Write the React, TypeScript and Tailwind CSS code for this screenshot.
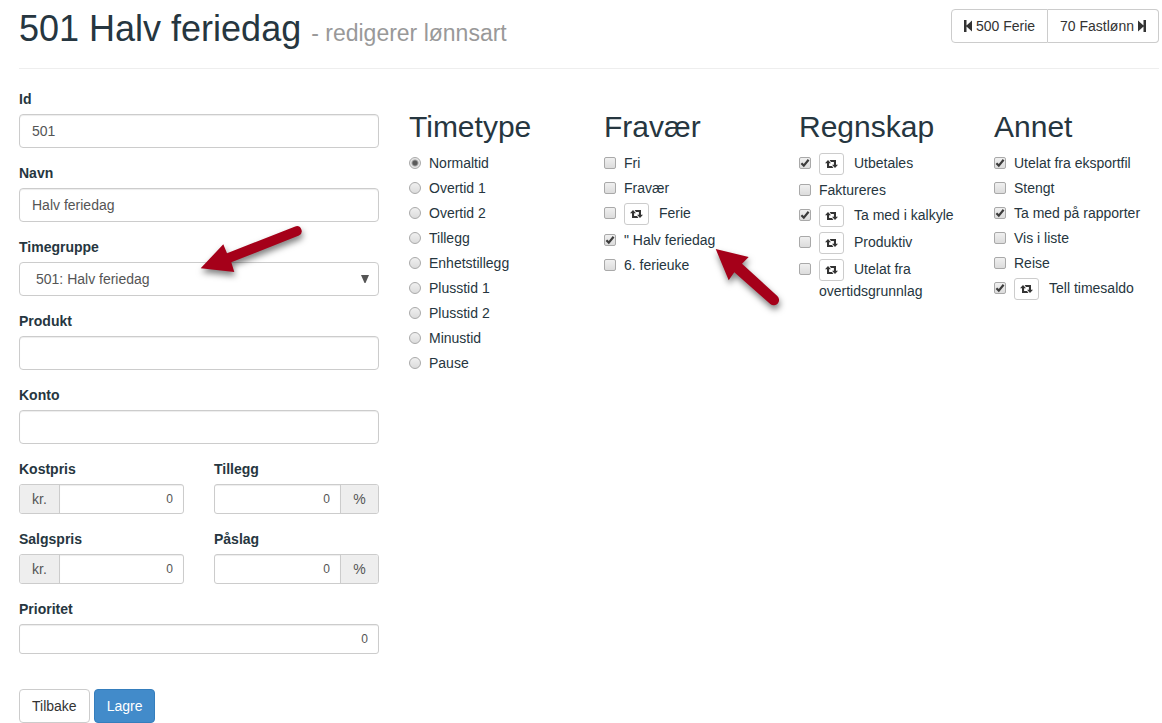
import { useId } from 'react';
import type { ReactNode } from 'react';

interface Option {
    label: string;
    checked?: boolean;
    sync?: boolean;
    pointer?: boolean;
}

const timeTypes = [
    'Normaltid',
    'Overtid 1',
    'Overtid 2',
    'Tillegg',
    'Enhetstillegg',
    'Plusstid 1',
    'Plusstid 2',
    'Minustid',
    'Pause',
];

const absence: Option[] = [
    { label: 'Fri' },
    { label: 'Fravær' },
    { label: 'Ferie', sync: true },
    { label: '" Halv feriedag', checked: true, pointer: true },
    { label: '6. ferieuke' },
];

const accounting: Option[] = [
    { label: 'Utbetales', checked: true, sync: true },
    { label: 'Faktureres' },
    { label: 'Ta med i kalkyle', checked: true, sync: true },
    { label: 'Produktiv', sync: true },
    { label: 'Utelat fra overtidsgrunnlag', sync: true },
];

const other: Option[] = [
    { label: 'Utelat fra eksportfil', checked: true },
    { label: 'Stengt' },
    { label: 'Ta med på rapporter', checked: true },
    { label: 'Vis i liste' },
    { label: 'Reise' },
    { label: 'Tell timesaldo', checked: true, sync: true },
];

function RetweetIcon() {
    return (
        <svg viewBox="0 0 13 8" className="w-[13px] h-2" fill="currentColor" aria-hidden="true">
            <path d="M3 0 L6 3.2 H4.1 V6 H7 L8.4 8 H2 V3.2 H0 Z" />
            <path d="M10 8 L7 4.8 H8.9 V2 H6 L4.6 0 H11 V4.8 H13 Z" />
        </svg>
    );
}

function StepIcon({ forward }: { forward?: boolean }) {
    return (
        <svg viewBox="0 0 9 12" className="w-[9px] h-3" fill="currentColor" aria-hidden="true">
            {forward ? (
                <path d="M1 0.5 L6.5 5.5 V0 H9 V12 H6.5 V6.5 L1 11.5 Z" />
            ) : (
                <path d="M8 0.5 L2.5 5.5 V0 H0 V12 H2.5 V6.5 L8 11.5 Z" />
            )}
        </svg>
    );
}

function Field({ label, children }: { label: string; children: (id: string) => ReactNode }) {
    const id = useId();

    return (
        <div className="relative mb-[15px]">
            <label htmlFor={id} className="block mb-[5px] font-bold">
                {label}
            </label>
            {children(id)}
        </div>
    );
}

function TextField({ label, value = '' }: { label: string; value?: string }) {
    return (
        <Field label={label}>
            {(id) => (
                <input
                    id={id}
                    type="text"
                    defaultValue={value}
                    className="block w-full h-[34px] px-3 border border-[#ccc] rounded text-[#555] shadow-[inset_0_1px_1px_rgba(0,0,0,0.075)]"
                />
            )}
        </Field>
    );
}

function NumberField({ label, prefix, suffix }: { label: string; prefix?: string; suffix?: string }) {
    return (
        <Field label={label}>
            {(id) => (
                <div className="flex h-[30px] border border-[#ccc] rounded-[3px] overflow-hidden text-[#555]">
                    {prefix && (
                        <span className="flex items-center px-3 bg-[#eee] border-r border-[#ccc]">{prefix}</span>
                    )}
                    <input
                        id={id}
                        type="text"
                        inputMode="numeric"
                        defaultValue="0"
                        className="flex-1 min-w-0 px-2.5 text-xs text-right shadow-[inset_0_1px_1px_rgba(0,0,0,0.075)]"
                    />
                    {suffix && (
                        <span className="flex items-center justify-center w-[38px] bg-[#eee] border-l border-[#ccc]">
                            {suffix}
                        </span>
                    )}
                </div>
            )}
        </Field>
    );
}

function OptionColumn({ title, children }: { title: string; children: ReactNode }) {
    return (
        <section className="pt-[21px]">
            <h2 className="mb-2.5 text-[30px] leading-[33px]">{title}</h2>
            <div className="flex flex-col gap-[5px]">{children}</div>
        </section>
    );
}

function CheckRow({ option }: { option: Option }) {
    const id = useId();

    return (
        <div className="relative flex gap-2">
            <span className="grid shrink-0 size-3 mt-1">
                <input
                    id={id}
                    type="checkbox"
                    defaultChecked={option.checked}
                    className="peer col-start-1 row-start-1 appearance-none size-3 border border-[#a9a9a9] rounded-xs bg-linear-to-b from-[#f0f0f0] to-[#dcdcdc]"
                />
                <svg
                    viewBox="0 0 12 12"
                    className="col-start-1 row-start-1 size-3 opacity-0 peer-checked:opacity-100 pointer-events-none"
                    fill="none"
                    stroke="#3c3c3c"
                    strokeWidth="2.2"
                    aria-hidden="true"
                >
                    <path d="M2.4 6.2 L4.8 8.6 L9.6 2.8" />
                </svg>
            </span>
            <div className="min-w-0">
                {option.sync && (
                    <button
                        type="button"
                        aria-label={`Synkroniser ${option.label}`}
                        className="inline-flex items-center justify-center w-[25px] h-[22px] mr-2.5 align-top border border-[#ccc] rounded-[3px] bg-white text-[#333]"
                    >
                        <RetweetIcon />
                    </button>
                )}
                <label htmlFor={id}>{option.label}</label>
            </div>
            {option.pointer && (
                <svg
                    viewBox="0 0 80 72"
                    className="absolute left-[106px] top-3 w-20 h-[72px] pointer-events-none drop-shadow-[1px_4px_3px_rgba(0,0,0,0.5)]"
                    fill="#a50019"
                    aria-hidden="true"
                >
                    <path d="M5.7 7 L38.7 15 L32 21.7 L67.3 54 A5.3 5.3 0 0 1 60.3 62 L24.3 30.3 L18.7 38.3 Z" />
                </svg>
            )}
        </div>
    );
}

export default function App() {
    return (
        <main className="pl-[19px] pr-[3px] pt-[9px] bg-white font-['Liberation_Sans',Arial,sans-serif] text-sm leading-5 text-[#263640]">
            <header className="flex justify-between items-start pb-[19px] border-b border-[#eee]">
                <h1 className="text-4xl leading-10">
                    501 Halv feriedag <small className="text-[23px] leading-none text-[#999]">- redigerer lønnsart</small>
                </h1>
                <nav className="flex h-[34px] text-[#333]">
                    <a href="#500" className="flex items-center gap-[3px] px-3 border border-[#ccc] rounded-l">
                        <StepIcon />
                        500 Ferie
                    </a>
                    <a href="#70" className="flex items-center gap-[3px] px-3 border border-l-0 border-[#ccc] rounded-r">
                        70 Fastlønn
                        <StepIcon forward />
                    </a>
                </nav>
            </header>

            <form className="grid grid-cols-6 gap-x-[30px] pt-5" onSubmit={(e) => e.preventDefault()}>
                <div className="col-span-2">
                    <TextField label="Id" value="501" />
                    <TextField label="Navn" value="Halv feriedag" />
                    <Field label="Timegruppe">
                        {(id) => (
                            <>
                                <div className="grid items-center">
                                    <select
                                        id={id}
                                        className="col-start-1 row-start-1 appearance-none w-full h-[34px] px-4 border border-[#ccc] rounded bg-white text-[#555]"
                                    >
                                        <option>501: Halv feriedag</option>
                                    </select>
                                    <svg
                                        viewBox="0 0 8 8"
                                        className="col-start-1 row-start-1 justify-self-end size-2 mr-2.5 pointer-events-none"
                                        fill="#555"
                                        aria-hidden="true"
                                    >
                                        <path d="M0 0 H8 L4.5 8 H3.5 Z" />
                                    </svg>
                                </div>
                                <svg
                                    viewBox="0 0 110 54"
                                    className="absolute left-[176px] -top-4 w-[110px] h-[54px] pointer-events-none drop-shadow-[1px_4px_3px_rgba(0,0,0,0.5)]"
                                    fill="#a50019"
                                    aria-hidden="true"
                                >
                                    <path d="M5.7 47.3 L28.3 23.3 L32 32.3 L100.2 5.4 A5 5 0 0 1 104 14.6 L36.3 41.3 L39.3 51 Z" />
                                </svg>
                            </>
                        )}
                    </Field>
                    <TextField label="Produkt" />
                    <TextField label="Konto" />
                    <div className="grid grid-cols-2 gap-x-[30px]">
                        <NumberField label="Kostpris" prefix="kr." />
                        <NumberField label="Tillegg" suffix="%" />
                        <NumberField label="Salgspris" prefix="kr." />
                        <NumberField label="Påslag" suffix="%" />
                    </div>
                    <NumberField label="Prioritet" />
                    <div className="flex gap-1 pt-5">
                        <button type="button" className="h-[34px] px-3 border border-[#ccc] rounded bg-white text-[#333]">
                            Tilbake
                        </button>
                        <button type="submit" className="h-[34px] px-3 border border-[#357ebd] rounded bg-[#428bca] text-white">
                            Lagre
                        </button>
                    </div>
                </div>

                <OptionColumn title="Timetype">
                    {timeTypes.map((type, index) => (
                        <label key={type} className="flex gap-2">
                            <input
                                type="radio"
                                name="timetype"
                                defaultChecked={index === 0}
                                className="shrink-0 appearance-none size-3 mt-1 border border-[#a9a9a9] rounded-full bg-linear-to-b from-[#f0f0f0] to-[#dcdcdc] checked:bg-[radial-gradient(circle,#5a5a5a_2px,#e6e6e6_4px)]"
                            />
                            {type}
                        </label>
                    ))}
                </OptionColumn>
                <OptionColumn title="Fravær">
                    {absence.map((option) => (
                        <CheckRow key={option.label} option={option} />
                    ))}
                </OptionColumn>
                <OptionColumn title="Regnskap">
                    {accounting.map((option) => (
                        <CheckRow key={option.label} option={option} />
                    ))}
                </OptionColumn>
                <OptionColumn title="Annet">
                    {other.map((option) => (
                        <CheckRow key={option.label} option={option} />
                    ))}
                </OptionColumn>
            </form>
        </main>
    );
}
